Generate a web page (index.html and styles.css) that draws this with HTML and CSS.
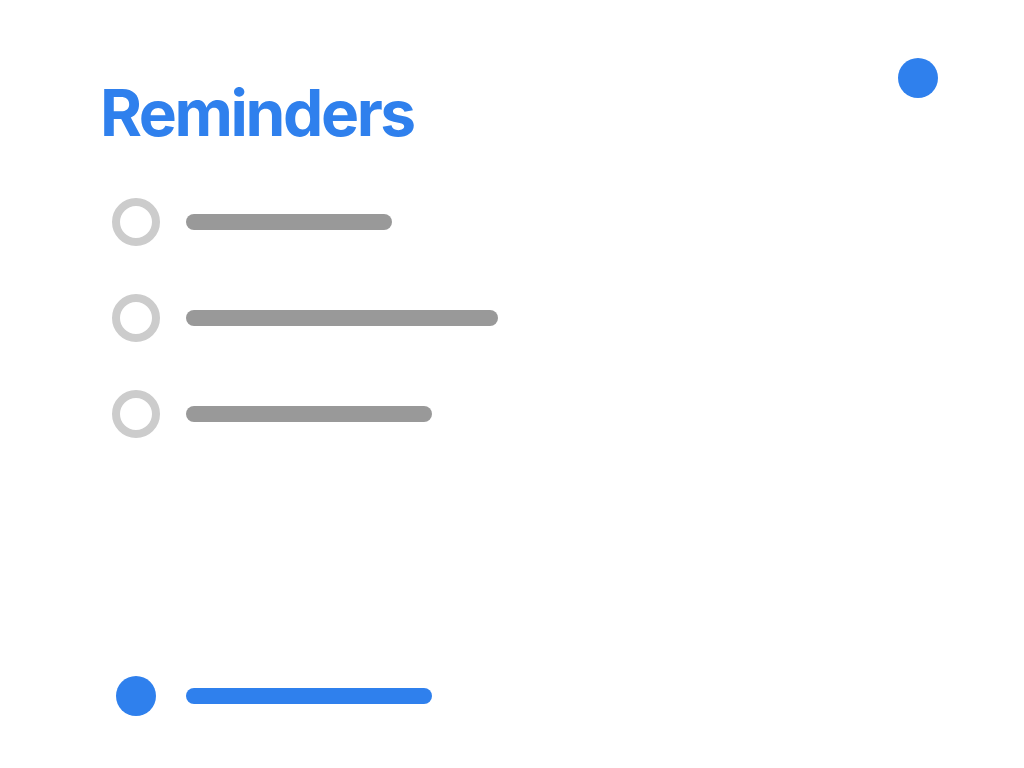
FILE: index.html
```html
<!DOCTYPE html>
<html lang="en">
<head>
<meta charset="utf-8">
<title>Reminders</title>
<link rel="stylesheet" href="styles.css">
</head>
<body>
<main class="page">
  <header class="header">
    <h1 class="title">Reminders</h1>
    <span class="dot dot-top"></span>
  </header>
  <ul class="list">
    <li class="item"><span class="check"></span><span class="bar" style="width:206px"></span></li>
    <li class="item"><span class="check"></span><span class="bar" style="width:312px"></span></li>
    <li class="item"><span class="check"></span><span class="bar" style="width:246px"></span></li>
  </ul>
  <footer class="footer">
    <span class="dot"></span>
    <span class="bar bar-blue" style="width:246px"></span>
  </footer>
</main>
</body>
</html>
```

FILE: styles.css
```css
html, body {
  margin: 0;
  padding: 0;
  background: #ffffff;
}

.page {
  box-sizing: border-box;
  height: 768px;
  padding: 58px 86px 52px 100px;
  display: flex;
  flex-direction: column;
  font-family: Inter, "Liberation Sans", sans-serif;
}

.header {
  display: flex;
  justify-content: space-between;
  align-items: flex-start;
}

.title {
  margin: 23px 0 0;
  font-size: 64px;
  line-height: 64px;
  font-weight: 700;
  color: #2f80ed;
  letter-spacing: -2.4px;
}

.dot {
  display: block;
  width: 40px;
  height: 40px;
  border-radius: 50%;
  background: #2f80ed;
  flex: none;
}

.list {
  list-style: none;
  margin: 53px 0 0;
  padding: 0 0 0 12px;
  display: flex;
  flex-direction: column;
  gap: 48px;
}

.item {
  display: flex;
  align-items: center;
  gap: 26px;
  height: 48px;
}

.check {
  box-sizing: border-box;
  width: 48px;
  height: 48px;
  border: 8px solid #cccccc;
  border-radius: 50%;
  flex: none;
}

.bar {
  display: block;
  height: 16px;
  border-radius: 8px;
  background: #999999;
}

.bar-blue {
  background: #2f80ed;
}

.footer {
  margin-top: auto;
  display: flex;
  align-items: center;
  gap: 30px;
  padding-left: 16px;
  height: 40px;
}
```
